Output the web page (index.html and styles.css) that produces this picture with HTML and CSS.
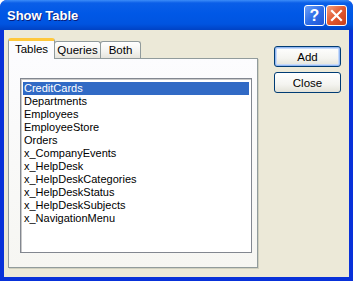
FILE: index.html
```html
<!DOCTYPE html>
<html lang="en">
<head>
    <meta charset="UTF-8">
    <title>Show Table</title>
    <link rel="stylesheet" href="styles.css">
</head>
<body>
    <div class="window">
        <div class="titlebar">
            <span class="title">Show Table</span>
            <div class="caption-buttons">
                <span class="cap-btn help">?</span>
                <span class="cap-btn close">
                    <svg width="13" height="13" viewBox="0 0 13 13">
                        <path d="M2 2 L11 11 M11 2 L2 11" stroke="#fff" stroke-width="2.2" stroke-linecap="square"/>
                    </svg>
                </span>
            </div>
        </div>

        <div class="dialog">
            <div class="tabs-area">
                <div class="tab-strip">
                    <div class="tab selected">Tables</div>
                    <div class="tab">Queries</div>
                    <div class="tab">Both</div>
                </div>
                <div class="tab-panel">
                    <ul class="listbox">
                        <li class="active">CreditCards</li>
                        <li>Departments</li>
                        <li>Employees</li>
                        <li>EmployeeStore</li>
                        <li>Orders</li>
                        <li>x_CompanyEvents</li>
                        <li>x_HelpDesk</li>
                        <li>x_HelpDeskCategories</li>
                        <li>x_HelpDeskStatus</li>
                        <li>x_HelpDeskSubjects</li>
                        <li>x_NavigationMenu</li>
                    </ul>
                </div>
            </div>
            <div class="actions">
                <button class="default">Add</button>
                <button>Close</button>
            </div>
        </div>
    </div>
</body>
</html>
```

FILE: styles.css
```css
body {
    margin: 0;
    font-family: "Liberation Sans", Arial, sans-serif;
    font-size: 11px;
    color: #000;
    background-color: #fff;
}
.window {
    width: 353px;
    height: 281px;
    box-sizing: border-box;
    background: #0831d9;
    display: flex;
    flex-direction: column;
    border-radius: 7px 7px 0 0;
    overflow: hidden;
}
.titlebar {
    height: 30px;
    flex-shrink: 0;
    display: flex;
    align-items: center;
    justify-content: space-between;
    padding: 0 6px 0 7px;
    background: linear-gradient(to bottom, #3c8cf8 0%, #0a5ee8 10%, #0058e6 45%, #0054e0 80%, #0042c4 100%);
}
.title {
    color: #fff;
    font-weight: bold;
    font-size: 13px;
    text-shadow: 1px 1px 0 #0a1e7a;
    margin-top: 1px;
}
.caption-buttons {
    display: flex;
    gap: 1px;
    margin-top: 1px;
}
.cap-btn {
    width: 19px;
    height: 19px;
    border: 1px solid #fff;
    border-radius: 3px;
    display: flex;
    align-items: center;
    justify-content: center;
    color: #fff;
    font-weight: bold;
    font-size: 16px;
}
.help {
    background: linear-gradient(135deg, #6fa0f7 0%, #2e6ee8 50%, #1f55d6 100%);
}
.close {
    background: linear-gradient(135deg, #f2a07f 0%, #e2572e 50%, #c9401c 100%);
}
.dialog {
    flex: 1;
    margin: 0 4px 4px 4px;
    background-color: #ece9d8;
    display: flex;
    padding: 8px 0 9px 4px;
}
.tabs-area {
    width: 250px;
    display: flex;
    flex-direction: column;
}
.tab-strip {
    display: flex;
    align-items: flex-end;
    height: 20px;
    position: relative;
    z-index: 1;
}
.tab {
    height: 17px;
    box-sizing: border-box;
    padding: 2px 0 0 0;
    border: 1px solid #919b9c;
    border-bottom: none;
    border-radius: 3px 3px 0 0;
    background: linear-gradient(to bottom, #fff 0%, #f3f3ef 60%, #e6e4dc 100%);
    text-align: center;
    margin-left: -1px;
    font-size: 11.5px;
}
.tab:nth-child(2) { width: 47px; }
.tab:nth-child(3) { width: 41px; }
.tab.selected {
    margin-left: 0;
    width: 47px;
    height: 21px;
    margin-bottom: -1px;
    padding-top: 2px;
    background: #fcfcfe;
    border-top: 3px solid #ffc83c;
}
.tab-panel {
    flex: 1;
    border: 1px solid #919b9c;
    background: linear-gradient(to bottom, #fcfcfe 0%, #f6f6f2 100%);
    box-shadow: 1px 1px 0 #d0d0bf;
    padding: 19px 5px 14px 11px;
    display: flex;
}
.listbox {
    flex: 1;
    margin: 0;
    padding: 3px 2px;
    list-style: none;
    background: #fff;
    border: 1px solid #828790;
    box-shadow: inset 1px 1px 0 #c8c8c8;
}
.listbox li {
    height: 13px;
    line-height: 13px;
    padding-left: 1px;
    font-size: 11px;
}
.listbox li.active {
    background-color: #316ac5;
    color: #fff;
}
.actions {
    display: flex;
    flex-direction: column;
    gap: 5px;
    margin-left: 16px;
    padding-top: 8px;
}
.actions button {
    width: 67px;
    height: 21px;
    font-family: "Liberation Sans", Arial, sans-serif;
    font-size: 11.5px;
    color: #000;
    border: 1px solid #003c74;
    border-radius: 3px;
    background: linear-gradient(to bottom, #fff 0%, #f4f4f0 60%, #e3e2d8 100%);
    padding: 0;
}
.actions button.default {
    box-shadow: inset 0 0 0 1px #94b8f2, inset 0 0 0 2px #c6dafa;
}
```
